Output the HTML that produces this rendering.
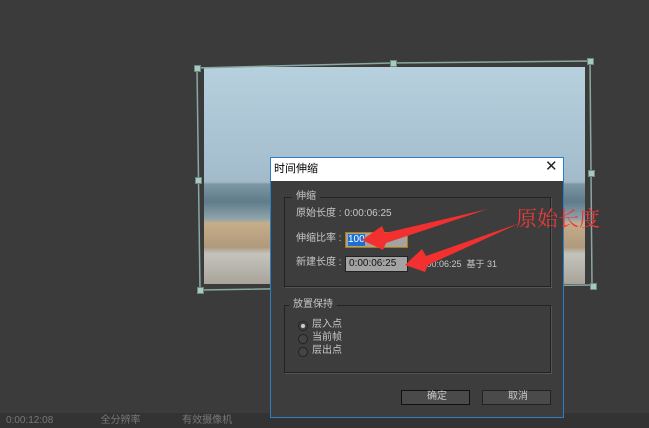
<!DOCTYPE html><html><head><meta charset="utf-8"><style>
body{margin:0;width:649px;height:428px;background:#3b3b3b;position:relative;overflow:hidden;font-family:"Liberation Sans","Noto Sans CJK SC",sans-serif;}
.a{position:absolute}
.t{position:absolute;font-size:10px;line-height:12px;color:#c8c8c8;white-space:nowrap}
.h{position:absolute;width:5px;height:5px;background:#a9c9c0;border:1px solid #6b8a83}
</style></head><body>
<div class="a" style="left:204px;top:67px;width:381px;height:217px;background:linear-gradient(180deg,#b6d0de 0%,#a6bfcf 45%,#a2b9c8 53%,#7d97a4 54%,#5f7c8a 62%,#8fa4ab 70%,#c6ad8a 72%,#b09a7c 83%,#c3c3bd 86%,#a9a49a 100%)"></div>
<svg class="a" style="left:0;top:0" width="649" height="428"><polyline points="197,68 392,63 590,61 592,285 395,287 200,290 197,68" fill="none" stroke="#8aa8a2" stroke-width="1.5"/></svg>
<div class="h" style="left:194px;top:65px"></div><div class="h" style="left:390px;top:60px"></div><div class="h" style="left:587px;top:58px"></div>
<div class="h" style="left:195px;top:177px"></div><div class="h" style="left:588px;top:170px"></div>
<div class="h" style="left:197px;top:287px"></div><div class="h" style="left:590px;top:283px"></div>
<div class="a" style="left:0;top:413px;width:649px;height:15px;background:#333"></div>
<div class="t" style="left:6px;top:415px;color:#777">0:00:12:08 &nbsp;&nbsp;&nbsp;&nbsp;&nbsp;&nbsp;&nbsp;&nbsp;&nbsp;&nbsp;&nbsp;&nbsp;&nbsp;&nbsp;&nbsp;&nbsp;全分辨率 &nbsp;&nbsp;&nbsp;&nbsp;&nbsp;&nbsp;&nbsp;&nbsp;&nbsp;&nbsp;&nbsp;&nbsp;&nbsp; 有效摄像机</div>
<div class="a" style="left:270px;top:157px;width:292px;height:259px;background:#3d3d3d;border:1px solid #2a7fc7"></div>
<div class="a" style="left:271px;top:158px;width:292px;height:23px;background:#fff"></div>
<div class="t" style="left:274px;top:163px;color:#000;font-size:11px">时间伸缩</div>
<div class="t" style="left:545px;top:161px;color:#222;font-size:15px">✕</div>
<div class="a" style="left:284px;top:197px;width:265px;height:88px;border:1px solid #222;box-shadow:1px 1px 0 #555"></div>
<div class="t" style="left:292px;top:191px;background:#3d3d3d;padding:0 4px">伸缩</div>
<div class="t" style="left:296px;top:208px">原始长度 : 0:00:06:25</div>
<div class="t" style="left:296px;top:233px">伸缩比率 :</div>
<div class="a" style="left:345px;top:232px;width:61px;height:14px;background:#a3a3a3;border:1px solid #b07a00"></div>
<div class="t" style="left:348px;top:234px;background:#1e6fd0;color:#fff">100</div>
<div class="t" style="left:296px;top:257px">新建长度 :</div>
<div class="a" style="left:345px;top:256px;width:61px;height:14px;background:#a3a3a3;border:1px solid #222"></div>
<div class="t" style="left:349px;top:258px;color:#111">0:00:06:25</div>
<div class="t" style="left:419px;top:258px;font-size:9px">0:00:06:25 &nbsp;基于 31</div>
<div class="a" style="left:284px;top:305px;width:265px;height:66px;border:1px solid #222;box-shadow:1px 1px 0 #555"></div>
<div class="t" style="left:289px;top:299px;background:#3d3d3d;padding:0 4px">放置保持</div>
<div class="a" style="left:298px;top:321px;width:8px;height:8px;border-radius:50%;border:1px solid #222;background:#444"></div><div class="a" style="left:301px;top:324px;width:4px;height:4px;border-radius:50%;background:#ccc"></div>
<div class="a" style="left:298px;top:334px;width:8px;height:8px;border-radius:50%;border:1px solid #222;background:#444"></div>
<div class="a" style="left:298px;top:347px;width:8px;height:8px;border-radius:50%;border:1px solid #222;background:#444"></div>
<div class="t" style="left:312px;top:319px">层入点</div>
<div class="t" style="left:312px;top:332px">当前帧</div>
<div class="t" style="left:312px;top:345px">层出点</div>
<div class="a" style="left:401px;top:390px;width:67px;height:13px;background:#4a4a4a;border:1px solid #111"></div>
<div class="t" style="left:427px;top:391px">确定</div>
<div class="a" style="left:482px;top:390px;width:67px;height:13px;background:#4a4a4a;border:1px solid #222"></div>
<div class="t" style="left:508px;top:391px">取消</div>
<svg class="a" style="left:0;top:0" width="649" height="428"><polygon points="488,209 385,233 382,226 362,240 383,250 386,243" fill="#f23030"/><polygon points="520,223 426,256 422,249 405,265 425,272 428,265" fill="#f23030"/></svg>
<div class="t" style="left:516px;top:205px;line-height:26px;color:#e83a3a;font-size:21px;font-family:'Noto Serif CJK SC',serif">原始长度</div>
</body></html>
